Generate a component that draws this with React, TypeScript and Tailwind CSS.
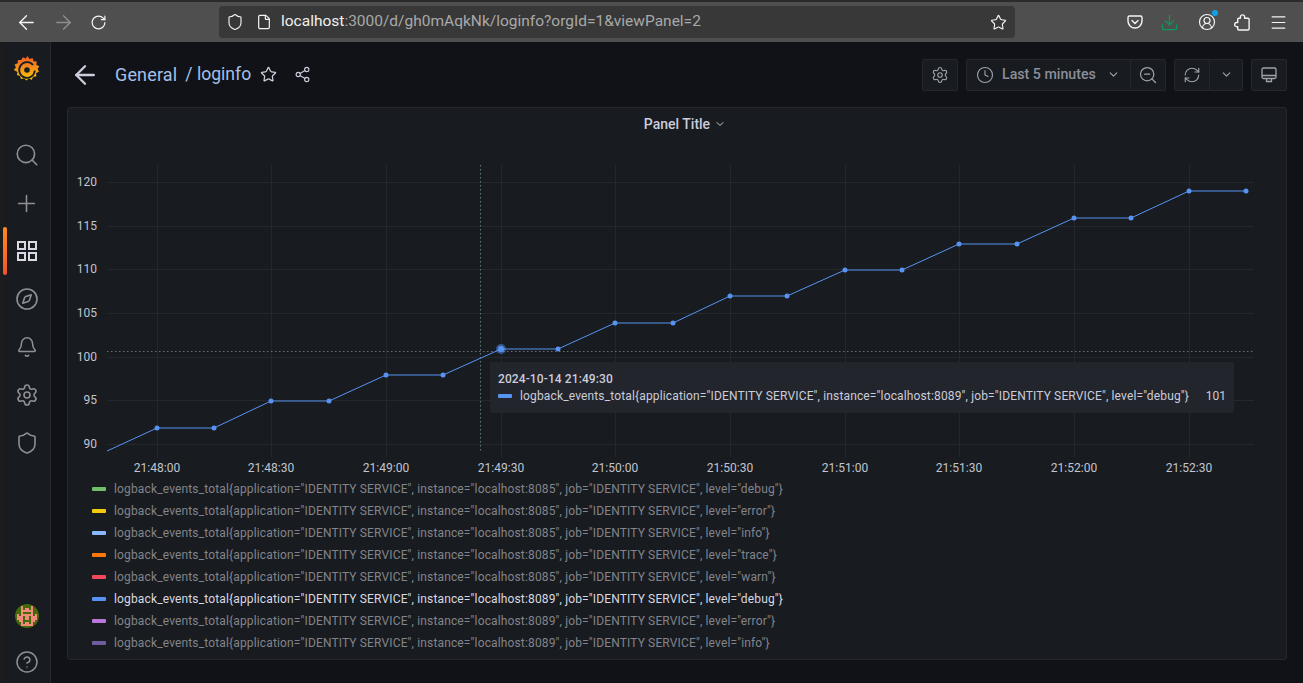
import type React from "react"
import { ArrowLeft, ArrowRight, RotateCw, Shield, File, Star, Share2, Settings, Clock, ChevronDown, ZoomOut, RefreshCw, Search, Plus, Compass, Bell, CircleHelp, CircleUserRound, Menu, Download } from "lucide-react"

const points: [number, number][] = [
  [107, 311], [157, 288], [214, 288], [271, 261], [329, 261], [386, 235], [443, 235], [501, 209], [558, 209], [615, 183],
  [673, 183], [730, 156], [787, 156], [845, 130], [902, 130], [959, 104], [1017, 104], [1074, 78], [1131, 78], [1189, 51], [1246, 51],
]

const hLines = [
  { label: "120", y: 42 },
  { label: "115", y: 86 },
  { label: "110", y: 129 },
  { label: "105", y: 173 },
  { label: "100", y: 217 },
  { label: "95", y: 260 },
  { label: "90", y: 304 },
]

const vLines = [
  { label: "21:48:00", x: 157 },
  { label: "21:48:30", x: 271 },
  { label: "21:49:00", x: 386 },
  { label: "21:49:30", x: 501 },
  { label: "21:50:00", x: 615 },
  { label: "21:50:30", x: 730 },
  { label: "21:51:00", x: 845 },
  { label: "21:51:30", x: 959 },
  { label: "21:52:00", x: 1074 },
  { label: "21:52:30", x: 1189 },
]

const legend = [
  { color: "#73bf69", instance: "8085", level: "debug" },
  { color: "#f2cc0c", instance: "8085", level: "error" },
  { color: "#8ab8ff", instance: "8085", level: "info" },
  { color: "#ff780a", instance: "8085", level: "trace" },
  { color: "#f2495c", instance: "8085", level: "warn" },
  { color: "#5794f2", instance: "8089", level: "debug", active: true },
  { color: "#b877d9", instance: "8089", level: "error" },
  { color: "#705da0", instance: "8089", level: "info" },
]

const seriesName = (instance: string, level: string) =>
  `logback_events_total{application="IDENTITY SERVICE", instance="localhost:${instance}", job="IDENTITY SERVICE", level="${level}"}`

function BrowserBar() {
  return (
    <div className="flex h-[42px] shrink-0 flex-col bg-[#2b2b2b]">
      <div className="mt-[2px] flex h-10 items-center bg-[#4f4f4f] pl-[15px] text-[#f5f5f5]">
        <ArrowLeft size={23} strokeWidth={1.4} className="shrink-0" />
        <ArrowRight size={23} strokeWidth={1.4} className="ml-[14px] shrink-0 text-[#8f8f8f]" />
        <RotateCw size={17} strokeWidth={1.7} className="ml-[15px] shrink-0" />
        <div className="ml-[112px] flex h-8 w-[796px] shrink-0 items-center rounded-[4px] bg-[#383838] pl-[7px] pr-[8px]">
          <Shield size={18} strokeWidth={1.5} className="shrink-0" />
          <File size={16} strokeWidth={1.8} className="ml-[12px] shrink-0" />
          <span className="ml-[9px] whitespace-nowrap text-[15.5px] text-[#f0f0f0]">
            localhost<span className="text-[#a9a9a9]">:3000/d/gh0mAqkNk/loginfo?orgId=1&amp;viewPanel=2</span>
          </span>
          <Star size={17} strokeWidth={1.6} className="ml-auto shrink-0" />
        </div>
        <svg viewBox="0 0 16 16" className="ml-[112px] h-[16px] w-[16px] shrink-0" fill="none" stroke="currentColor" strokeWidth="1.4">
          <path d="M2.500 2h11a1.500 1.500 0 0 1 1.500 1.500V7a7 7 0 0 1-14 0V3.500A1.500 1.500 0 0 1 2.500 2z" />
          <path d="M5 6.500 8 9.500l3-3" strokeLinecap="round" />
        </svg>
        <Download size={19} strokeWidth={1.6} className="ml-[17px] shrink-0 text-[#0a9a5d]" />
        <div className="relative ml-[19px] shrink-0">
          <CircleUserRound size={18} strokeWidth={1.6} />
          <span className="absolute -right-[2px] -top-[3px] h-[6px] w-[6px] rounded-full bg-[#0da2ea]" />
        </div>
        <svg viewBox="0 0 16 16" className="ml-[18px] h-[17px] w-[17px] shrink-0" fill="none" stroke="currentColor" strokeWidth="1.3" strokeLinejoin="round">
          <path d="M6 2.800a2 2 0 0 1 4 0V4h3.200a1 1 0 0 1 1 1v9a1 1 0 0 1-1 1H4.500a1 1 0 0 1-1-1v-2H2.600a2 2 0 0 1 0-4h.9V5a1 1 0 0 1 1-1H6z" />
        </svg>
        <Menu size={19} strokeWidth={1.5} className="ml-[18px] shrink-0" />
      </div>
    </div>
  )
}

function GrafanaLogo() {
  return (
    <svg viewBox="0 0 28 28" className="h-[28px] w-[28px]">
      <defs>
        <linearGradient id="gf" x1="0" y1="1" x2="0" y2="0">
          <stop offset="0" stopColor="#fbca0a" />
          <stop offset="1" stopColor="#f05a28" />
        </linearGradient>
      </defs>
      <path
        fill="url(#gf)"
        d="M14.500 1l2 3 3.200-1 .8 3.200 3.300.3-.5 3.300 3 1.500-1.700 2.800 1.400 2.400-2.900 1.700.2 3.200-3.200.4-1.300 2.900-3-1.200-2.400 2.100-2.300-2.300-3.200.8-.8-3.200-3.200-.9.6-3.100L.8 15l2.100-2.500L1.600 9.600l3.100-1.400.2-3.300 3.300.1 1.600-2.800 2.900 1.400z"
      />
      <path d="M20 10a7.800 7.800 0 1 0 1.800 5.500" fill="none" stroke="#181b1f" strokeWidth="1.800" />
      <circle cx="14" cy="15" r="2.800" fill="#181b1f" />
    </svg>
  )
}

function Avatar() {
  // 12x12 pixel identicon
  const rows = [
    "............",
    "...x....x...",
    "...x.xx.x...",
    "...xxxxxx...",
    "...x....x...",
    ".x.xxxxxx.x.",
    ".xxx.xx.xxx.",
    ".xxx.xx.xxx.",
    "..xx....xx..",
    "...x.xx.x...",
    "...xxxxxx...",
    "............",
  ]
  return (
    <svg viewBox="0 0 12 12" className="h-6 w-6 rounded-full bg-[#44690b]" shapeRendering="crispEdges">
      {rows.map((row, y) =>
        row.split("").map((c, x) => (c === "x" ? <rect key={`${x}-${y}`} x={x} y={y} width="1" height="1" fill="#f28a7c" /> : null)),
      )}
    </svg>
  )
}

function NavItem({ children, active }: { children: React.ReactNode; active?: boolean }) {
  return (
    <div className="relative flex h-12 w-full items-center justify-center">
      {active && <span className="absolute left-0 top-0 h-12 w-1 rounded-[2px] bg-gradient-to-b from-[#ff8a1f] to-[#f2512e]" />}
      {children}
    </div>
  )
}

function Sidebar() {
  return (
    <aside className="ml-[3px] flex w-[48px] shrink-0 flex-col items-center border-r border-[#24272c] bg-[#181b1f] text-[#8e8f98]">
      <div className="mt-[13px] h-[28px]">
        <GrafanaLogo />
      </div>
      <div className="mt-[48px] flex w-full flex-col">
        <NavItem>
          <Search size={26} strokeWidth={1.5} />
        </NavItem>
        <NavItem>
          <Plus size={27} strokeWidth={1.4} />
        </NavItem>
        <NavItem active>
          <svg viewBox="0 0 20 20" className="h-5 w-5 text-[#d8d9e3]" fill="none" stroke="currentColor" strokeWidth="2">
            <rect x="1" y="1" width="7" height="7" />
            <rect x="12" y="1" width="7" height="7" />
            <rect x="1" y="12" width="7" height="7" />
            <rect x="12" y="12" width="7" height="7" />
          </svg>
        </NavItem>
        <NavItem>
          <Compass size={24} strokeWidth={1.6} />
        </NavItem>
        <NavItem>
          <Bell size={22} strokeWidth={1.7} />
        </NavItem>
        <NavItem>
          <Settings size={24} strokeWidth={1.6} />
        </NavItem>
        <NavItem>
          <Shield size={24} strokeWidth={1.6} />
        </NavItem>
      </div>
      <div className="mt-auto">
        <Avatar />
      </div>
      <CircleHelp size={24} strokeWidth={1.5} className="mb-[9px] mt-[22px]" />
    </aside>
  )
}

function ToolButton({ children, className = "" }: { children: React.ReactNode; className?: string }) {
  return (
    <div className={`flex h-8 items-center justify-center border border-[#24272c] bg-[#181b1f] text-[#a0a2ad] ${className}`}>
      {children}
    </div>
  )
}

function DashHeader() {
  return (
    <div className="flex h-[65px] shrink-0 items-center pl-[19px] pr-[16px]">
      <ArrowLeft size={30} strokeWidth={1.9} className="text-[#ccccdc]" />
      <span className="ml-[15px] text-[18px] tracking-[0.15px] text-[#a3c0e8]">General</span>
      <span className="ml-[8px] text-[17.6px] text-[#a3c0e8]">/ loginfo</span>
      <Star size={17} strokeWidth={1.8} className="ml-[9px] text-[#ccccdc]" />
      <Share2 size={17} strokeWidth={1.6} className="ml-[17px] text-[#ccccdc]" />
      <div className="ml-auto flex items-center">
        <ToolButton className="w-9 rounded-[2px]">
          <Settings size={18} strokeWidth={1.5} />
        </ToolButton>
        <ToolButton className="ml-[8px] w-[165px] rounded-l-[2px] pl-[9px] pr-[10px]">
          <Clock size={18} strokeWidth={1.5} />
          <span className="ml-[8px] whitespace-nowrap text-[14.2px] font-medium text-[#8b8e99]">Last 5 minutes</span>
          <ChevronDown size={13} strokeWidth={2} className="ml-auto" />
        </ToolButton>
        <ToolButton className="w-[35px] rounded-r-[2px] border-l-0">
          <ZoomOut size={20} strokeWidth={1.5} />
        </ToolButton>
        <ToolButton className="ml-[8px] w-9 rounded-l-[2px]">
          <RefreshCw size={18} strokeWidth={1.5} />
        </ToolButton>
        <ToolButton className="w-[33px] rounded-r-[2px] border-l-0">
          <ChevronDown size={13} strokeWidth={2} />
        </ToolButton>
        <ToolButton className="ml-[8px] w-9 rounded-[2px]">
          <svg viewBox="0 0 16 16" className="h-4 w-4" fill="none" stroke="currentColor" strokeWidth="1.300">
            <rect x="1" y="1" width="14" height="10.500" rx="1.500" />
            <path d="M1 8.500h14M5.500 11.500v3h5v-3" />
          </svg>
        </ToolButton>
      </div>
    </div>
  )
}

function Chart() {
  const line = points.map(([x, y]) => `${x},${y}`).join(" ")
  return (
    <div className="relative h-[340px] w-full">
      {/* svg uses page x coords, y offset by 140 */}
      <svg width="1303" height="340" className="absolute left-[-68px] top-0 font-['Roboto',sans-serif]">
        {hLines.map((l) => (
          <g key={l.label}>
            <line x1="107" x2="1254" y1={l.y + 0.5} y2={l.y + 0.5} stroke="#24272b" />
            <text x="97" y={l.y + 4} textAnchor="end" fontSize="12" fill="#c3c4cf">
              {l.label}
            </text>
          </g>
        ))}
        {vLines.map((l) => (
          <g key={l.x}>
            <line x1={l.x + 0.5} x2={l.x + 0.5} y1="25" y2="317" stroke="#24272b" />
            <text x={l.x} y="332" textAnchor="middle" fontSize="12" fill="#c3c4cf">
              {l.label}
            </text>
          </g>
        ))}
        <line x1="107" x2="1254" y1="211.500" y2="211.500" stroke="#6a7070" strokeDasharray="1.500 2.500" />
        <line x1="480.500" x2="480.500" y1="25" y2="313" stroke="#5e7c7c" strokeDasharray="1.500 2.500" />
        <polyline points={line} fill="none" stroke="#5794f2" strokeWidth="1" />
        {points.slice(1).map(([x, y]) => (
          <circle key={x} cx={x} cy={y} r="2.500" fill="#5794f2" />
        ))}
        <circle cx="501" cy="209" r="5" fill="#5794f2" fillOpacity="0.5" />
        <circle cx="501" cy="209" r="3" fill="#5794f2" />
      </svg>
      <div className="absolute left-[422px] top-[222px] flex h-[51px] w-[744px] flex-col justify-center rounded-[2px] bg-[#22252b] pl-[8px] pr-[8px] text-[12px] leading-[17px] text-[#ccccdc]">
        <div className="font-medium tracking-[0.1px]">2024-10-14 21:49:30</div>
        <div className="flex items-center">
          <span className="h-1 w-[14px] rounded-[1px] bg-[#5794f2]" />
          <span className="ml-[8px] whitespace-nowrap tracking-[0.145px]">{seriesName("8089", "debug")}</span>
          <span className="ml-auto">101</span>
        </div>
      </div>
    </div>
  )
}

function Legend() {
  return (
    <div className="ml-[24px] mt-[-2px] flex flex-col">
      {legend.map((item) => (
        <div key={item.color} className="flex h-[22px] items-center text-[12px]">
          <span className="h-1 w-[14px] rounded-[1px]" style={{ backgroundColor: item.color }} />
          <span className={item.active ? "ml-[8px] tracking-[0.145px] text-[#d8d9e3]" : "ml-[8px] tracking-[0.145px] text-[#83848c]"}>
            {seriesName(item.instance, item.level)}
          </span>
        </div>
      ))}
    </div>
  )
}

export default function App() {
  return (
    <div className="flex h-[683px] w-[1303px] flex-col overflow-hidden bg-[#111217] font-['Roboto',sans-serif]">
      <BrowserBar />
      <div className="flex min-h-0 flex-1 bg-[#1c1c1c]">
        <Sidebar />
        <main className="flex min-w-0 flex-1 flex-col bg-[#111217]">
          <DashHeader />
          <div className="mx-[16px] h-[553px] rounded-[3px] border border-[#24272c] bg-[#181b1f]">
            <div className="flex h-[32px] items-center justify-center pl-[16px] text-[14px] font-medium text-[#ccccdc]">
              Panel Title
              <ChevronDown size={12} strokeWidth={2} className="ml-[4px]" />
            </div>
            <Chart />
            <Legend />
          </div>
        </main>
      </div>
    </div>
  )
}
